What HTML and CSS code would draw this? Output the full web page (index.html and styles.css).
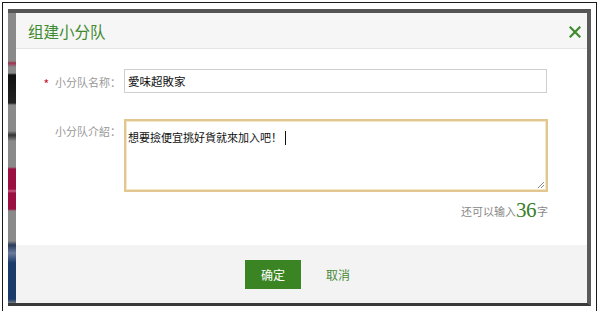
FILE: index.html
```html
<!DOCTYPE html>
<html lang="zh">
<head>
<meta charset="utf-8">
<link rel="stylesheet" href="styles.css">
</head>
<body>
<div class="outer">
  <div class="frame">
    <div class="backdrop"></div>
    <div class="modal">
      <div class="modal-head">
        <span class="title">组建小分队</span>
        <span class="close">
          <svg width="12" height="12" viewBox="0 0 12 12"><path d="M1.5 1.5 L10.5 10.5 M10.5 1.5 L1.5 10.5" stroke="#3f8a2f" stroke-width="2.2" stroke-linecap="square"/></svg>
        </span>
      </div>
      <div class="modal-body">
        <div class="row">
          <div class="label"><span class="req">*</span>小分队名称：</div>
          <div class="input">愛味超敗家</div>
        </div>
        <div class="row row-area">
          <div class="label label-top">小分队介紹：</div>
          <div class="textarea">想要撿便宜挑好貨就來加入吧！<span class="caret"></span>
            <svg class="grip" width="8" height="8" viewBox="0 0 8 8"><path d="M7 1 L1 7 M7 4 L4 7" stroke="#888" stroke-width="1"/></svg>
          </div>
        </div>
        <div class="counter">还可以输入<span class="num">36</span>字</div>
      </div>
      <div class="modal-foot">
        <span class="btn-ok">确定</span>
        <span class="btn-cancel">取消</span>
      </div>
    </div>
  </div>
</div>
</body>
</html>
```

FILE: styles.css
```css
html, body {
  margin: 0;
  padding: 0;
  background: #fff;
}
body {
  width: 600px;
  height: 316px;
  overflow: hidden;
  font-family: "Noto Sans CJK SC", "Liberation Sans", sans-serif;
}
.outer {
  margin: 2px 2px 0 2px;
  width: 595px;
  height: 309px;
  border: 1px solid #1a1a1a;
  border-bottom: none;
  box-sizing: border-box;
  padding: 6px 5px 0 5px;
}
.frame {
  display: flex;
  height: 297px;
  background: #8c8c8c;
  border-top: 4px solid #555;
  border-right: 4px solid #5a5a5a;
  border-bottom: 3px solid #3a3a3a;
  box-sizing: border-box;
}
.backdrop {
  width: 8px;
  flex: none;
  background: linear-gradient(to bottom,
    #8a8a8a 0, #8a8a8a 48px,
    #a03050 50px, #8a8a8a 54px,
    #8a8a8a 60px, #111 62px, #222 90px, #8a8a8a 92px,
    #8a8a8a 118px, #333 122px, #8a8a8a 128px,
    #8a8a8a 154px, #9a1040 156px, #9a1040 176px, #c06080 178px, #9a1040 180px, #9a1040 196px, #8a8a8a 198px,
    #8a8a8a 228px, #2a3a5a 232px, #6a7a9a 240px, #1a3a6a 250px, #1a3a6a 286px, #8a8a8a 291px);
}
.modal {
  flex: 1;
  display: flex;
  flex-direction: column;
  background: #fff;
}
.modal-head {
  height: 36px;
  flex: none;
  background: #f6f6f6;
  border-bottom: 1px solid #e4e4e4;
  box-sizing: border-box;
  display: flex;
  align-items: center;
  justify-content: space-between;
  padding: 0 6px 0 12px;
}
.title {
  color: #3f8a2f;
  font-size: 15.5px;
}
.close {
  display: flex;
  padding-top: 2px;
}
.modal-body {
  flex: 1;
  padding-top: 20px;
}
.row {
  display: flex;
  align-items: center;
}
.row-area {
  align-items: flex-start;
  margin-top: 26px;
}
.label {
  width: 108px;
  flex: none;
  text-align: right;
  padding-right: 3px;
  box-sizing: border-box;
  font-size: 11px;
  color: #999;
}
.label-top {
  padding-top: 4px;
}
.req {
  color: #c8102e;
  font-size: 12px;
  margin-right: 6px;
  position: relative;
  top: 2px;
}
.input {
  width: 423px;
  height: 24px;
  box-sizing: border-box;
  border: 1px solid #cfcfcf;
  font-size: 11.5px;
  color: #111;
  line-height: 22px;
  padding-left: 3px;
}
.textarea {
  position: relative;
  width: 424px;
  height: 73px;
  box-sizing: border-box;
  border: 2px solid #e2c890;
  box-shadow: inset 0 0 0 1px #f3e6c6;
  font-size: 11px;
  color: #111;
  padding: 7px 0 0 2px;
  line-height: 18px;
}
.caret {
  display: inline-block;
  width: 1px;
  height: 14px;
  background: #111;
  margin-left: 3px;
  vertical-align: -3px;
}
.grip {
  position: absolute;
  right: 1px;
  bottom: 1px;
}
.counter {
  width: 532px;
  text-align: right;
  font-size: 11px;
  color: #888;
  margin-top: 6px;
}
.num {
  font-family: "Liberation Serif", "DejaVu Serif", serif;
  font-size: 21px;
  color: #3a7d28;
  letter-spacing: -0.5px;
  margin-right: 1px;
  vertical-align: -1px;
}
.modal-foot {
  height: 58px;
  flex: none;
  background: #f3f3f3;
  display: flex;
  align-items: center;
  justify-content: center;
  gap: 25px;
  padding-right: 4px;
}
.btn-ok {
  width: 56px;
  height: 29px;
  background: #3b8423;
  color: #fff;
  font-size: 12px;
  display: flex;
  align-items: center;
  justify-content: center;
}
.btn-cancel {
  color: #4a8a3a;
  font-size: 12px;
  width: 28px;
}
```
